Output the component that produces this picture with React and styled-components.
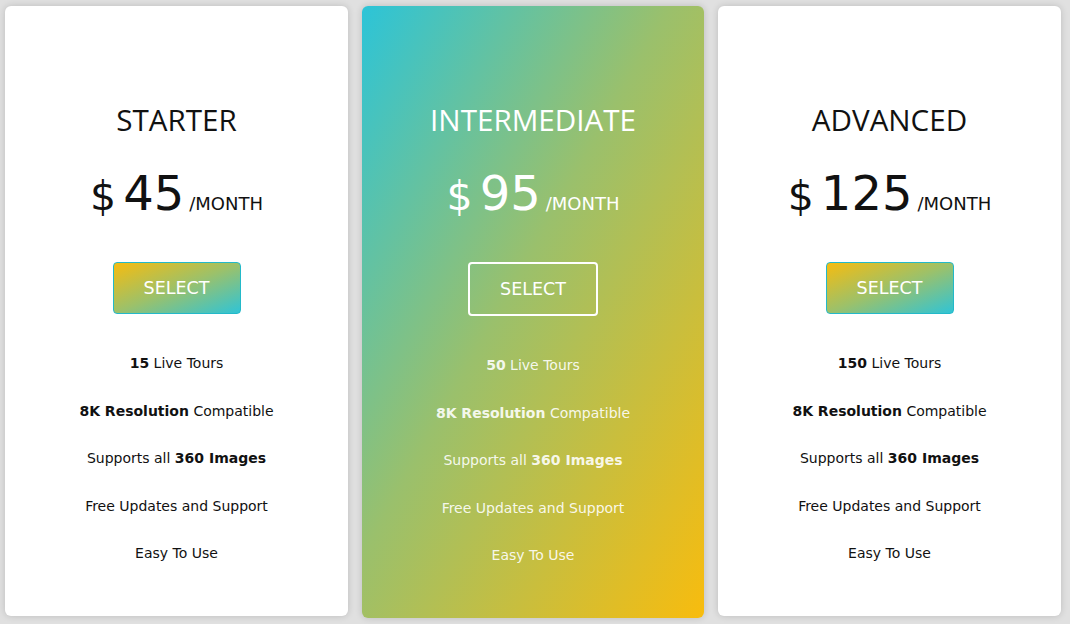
import React from 'react';
import styled, { createGlobalStyle, css } from 'styled-components';

const GlobalStyle = createGlobalStyle`
  html, body {
    margin: 0;
    padding: 0;
    background: #e0e0e0;
  }
  body {
    font-family: "DejaVu Sans", sans-serif;
  }
`;

const plans = [
  { name: 'STARTER', price: 45, tours: 15 },
  { name: 'INTERMEDIATE', price: 95, tours: 50, featured: true },
  { name: 'ADVANCED', price: 125, tours: 150 },
];

const Board = styled.div`
  display: flex;
  align-items: flex-start;
  gap: 14px;
  padding: 6px 5px;
`;

const Card = styled.div`
  width: 343px;
  box-sizing: border-box;
  display: flex;
  flex-direction: column;
  align-items: center;
  padding: 96px 0 53px;
  border-radius: 6px;
  background: #fff;
  color: #111;
  box-shadow: 0 0 7px rgba(0, 0, 0, 0.16);

  ${p => p.$featured && css`
    width: 342px;
    background: linear-gradient(to bottom right, #2cc4d8 0%, #9ac06c 45%, #f8bc0e 100%);
    color: #fff;
  `}
`;

const Title = styled.h2`
  margin: 0;
  font-family: "Open Sans", "DejaVu Sans", sans-serif;
  font-weight: 400;
  font-size: 29.6px;
  line-height: 36px;
`;

const Price = styled.div`
  display: flex;
  align-items: baseline;
  margin-top: 27px;
  height: 56px;
  line-height: 56px;
`;

const Currency = styled.span`
  font-size: 41px;
  margin-right: 7px;
`;

const Amount = styled.span`
  font-size: 48px;
`;

const Period = styled.span`
  font-size: 18px;
  margin-left: 5px;
`;

const SelectButton = styled.button`
  margin-top: 41px;
  width: 128px;
  height: 52px;
  border-radius: 4px;
  border: 1px solid #23b9c9;
  background: linear-gradient(to bottom right, #f6bc10 0%, #9cc16a 50%, #30c4d6 100%);
  color: #fff;
  font-family: "DejaVu Sans", sans-serif;
  font-size: 17.5px;
  cursor: pointer;

  ${p => p.$featured && css`
    width: 130px;
    height: 54px;
    border: 2px solid #fff;
    background: transparent;
  `}
`;

const Features = styled.ul`
  list-style: none;
  margin: 39px 0 0;
  padding: 0;
  display: flex;
  flex-direction: column;
  align-items: center;
  gap: 27.5px;
`;

const Feature = styled.li`
  font-size: 14px;
  line-height: 20px;
  color: ${p => (p.$featured ? 'rgba(255,255,255,0.9)' : '#111')};

  b {
    font-weight: 700;
  }
`;

export default function App() {
  return (
    <>
      <GlobalStyle />
      <Board>
        {plans.map(plan => (
          <Card key={plan.name} $featured={plan.featured}>
            <Title>{plan.name}</Title>
            <Price>
              <Currency>$</Currency>
              <Amount>{plan.price}</Amount>
              <Period>/MONTH</Period>
            </Price>
            <SelectButton $featured={plan.featured}>SELECT</SelectButton>
            <Features>
              <Feature $featured={plan.featured}><b>{plan.tours}</b> Live Tours</Feature>
              <Feature $featured={plan.featured}><b>8K Resolution</b> Compatible</Feature>
              <Feature $featured={plan.featured}>Supports all <b>360 Images</b></Feature>
              <Feature $featured={plan.featured}>Free Updates and Support</Feature>
              <Feature $featured={plan.featured}>Easy To Use</Feature>
            </Features>
          </Card>
        ))}
      </Board>
    </>
  );
}
